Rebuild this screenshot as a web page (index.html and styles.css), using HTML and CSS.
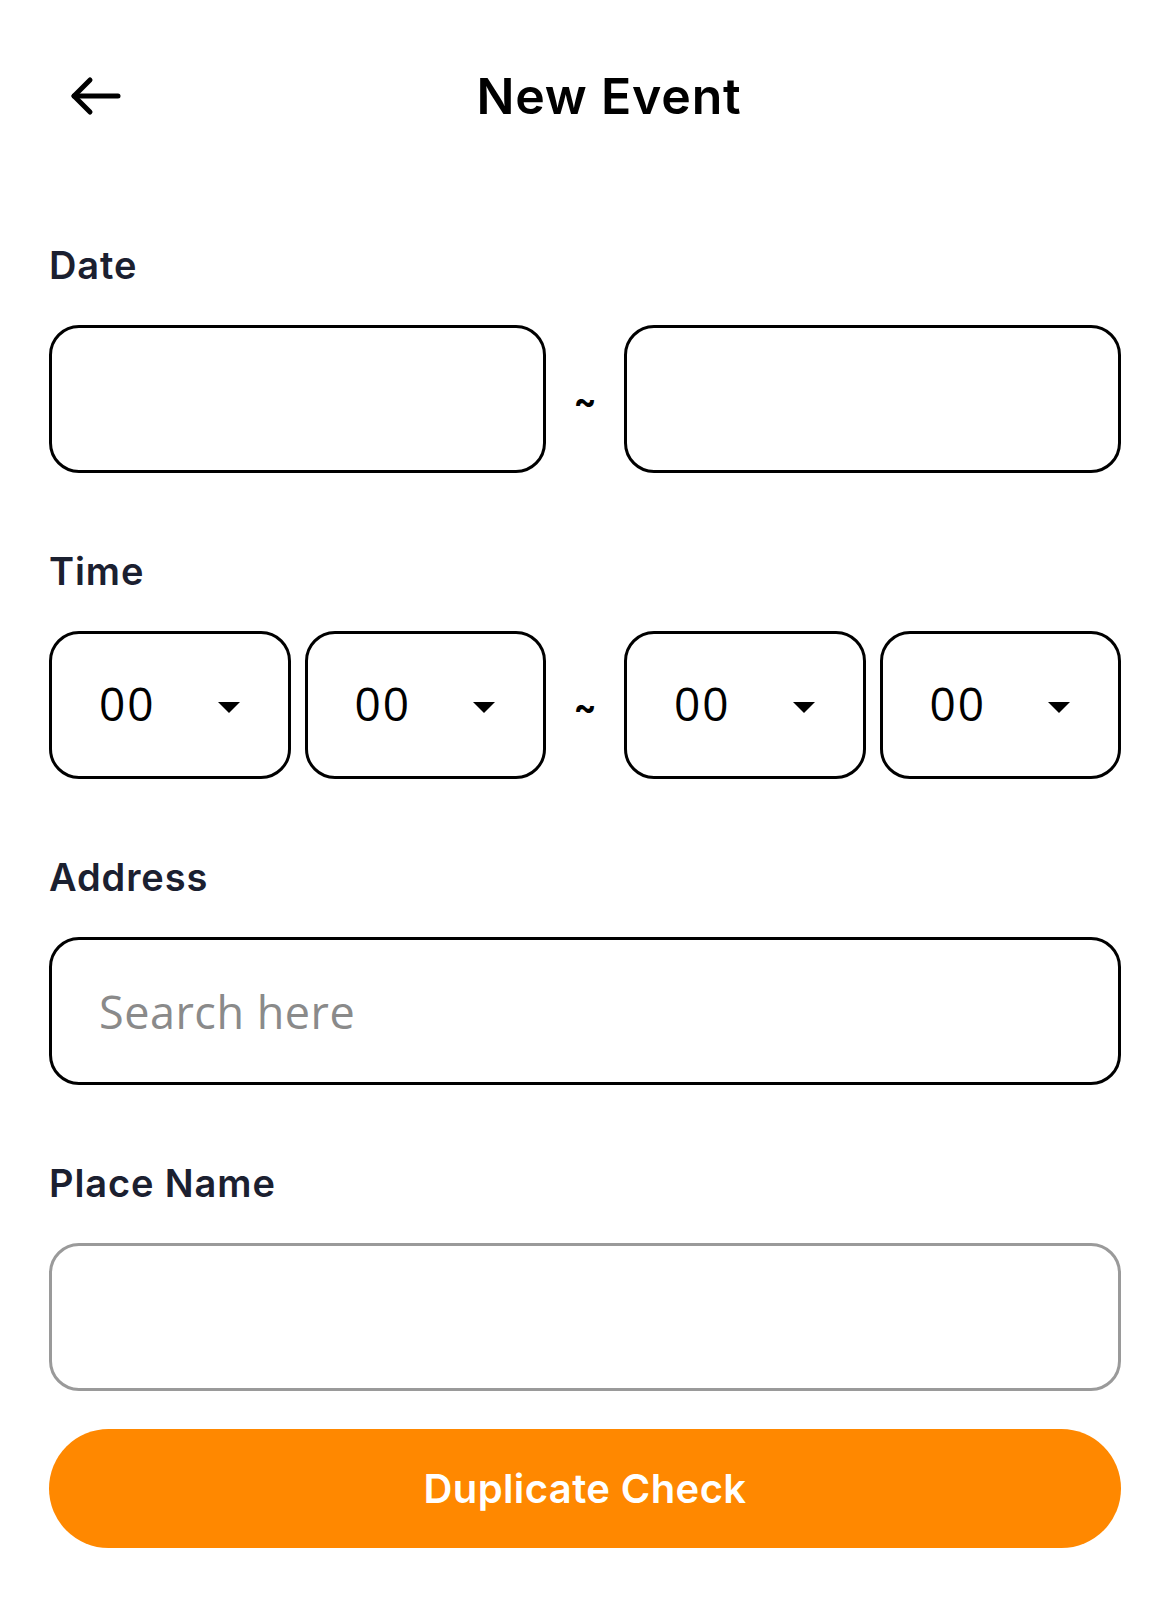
FILE: index.html
```html
<!DOCTYPE html>
<html lang="en">
<head>
<meta charset="utf-8">
<title>New Event</title>
<link rel="stylesheet" href="styles.css">
</head>
<body>
<div class="screen">
  <header class="header">
    <button class="back" aria-label="Back">
      <svg width="54" height="42" viewBox="0 0 54 42" fill="none" stroke="#000" stroke-width="5" stroke-linecap="round" stroke-linejoin="round">
        <path d="M50 21 H6"/>
        <path d="M22 5 L6 21 L22 37"/>
      </svg>
    </button>
    <h1 class="title">New Event</h1>
  </header>

  <main class="form">
    <section class="field">
      <div class="label">Date</div>
      <div class="range">
        <div class="box"></div>
        <div class="tilde">~</div>
        <div class="box"></div>
      </div>
    </section>

    <section class="field">
      <div class="label">Time</div>
      <div class="range">
        <div class="pair">
          <div class="box select"><span class="val">00</span><span class="caret"></span></div>
          <div class="box select"><span class="val">00</span><span class="caret"></span></div>
        </div>
        <div class="tilde">~</div>
        <div class="pair">
          <div class="box select"><span class="val">00</span><span class="caret"></span></div>
          <div class="box select"><span class="val">00</span><span class="caret"></span></div>
        </div>
      </div>
    </section>

    <section class="field">
      <div class="label">Address</div>
      <div class="box text-box"><span class="placeholder">Search here</span></div>
    </section>

    <section class="field">
      <div class="label">Place Name</div>
      <div class="box box-muted"></div>
    </section>

    <button class="primary">Duplicate Check</button>
  </main>
</div>
</body>
</html>
```

FILE: styles.css
```css
* { box-sizing: border-box; }

html, body {
  margin: 0;
  padding: 0;
  background: #fff;
}

body {
  font-family: Inter, "Noto Sans", "Liberation Sans", sans-serif;
  color: #000;
}

.screen {
  width: 1170px;
  min-height: 1609px;
}

.header {
  height: 192px;
  display: flex;
  align-items: center;
  padding: 0 74px 0 68px;
}

.back {
  border: 0;
  background: none;
  padding: 0;
  margin: 0;
  width: 54px;
  height: 42px;
  display: block;
}

.back svg { display: block; }

.title {
  flex: 1;
  margin: 0;
  text-align: center;
  font-size: 50px;
  font-weight: 600;
  letter-spacing: 0.8px;
  color: #000;
}

.form {
  padding: 51px 49px 0 49px;
  display: flex;
  flex-direction: column;
}

.field {
  display: flex;
  flex-direction: column;
  gap: 38px;
  margin-bottom: 76px;
}

.field:nth-last-of-type(1) {
  margin-bottom: 38px;
}

.label {
  height: 44px;
  line-height: 44px;
  font-size: 38px;
  font-weight: 600;
  letter-spacing: 0.9px;
  color: #1b2030;
}

.range {
  display: grid;
  grid-template-columns: 1fr 78px 1fr;
}

.pair {
  display: grid;
  grid-template-columns: 1fr 1fr;
  gap: 14px;
}

.box {
  height: 148px;
  border: 3px solid #000;
  border-radius: 30px;
  background: #fff;
}

.box-muted {
  border-color: #9a9a9a;
}

.tilde {
  display: flex;
  align-items: center;
  justify-content: center;
  font-size: 34px;
  font-weight: 700;
  color: #000;
  padding-top: 2px;
}

.select {
  display: flex;
  align-items: center;
  justify-content: space-between;
  padding: 0 48px 0 47px;
}

.val {
  font-family: "Open Sans", "Noto Sans", sans-serif;
  font-size: 46px;
  font-weight: 400;
  letter-spacing: 2px;
  color: #000;
  line-height: 1;
  margin-top: -4px;
}

.caret {
  width: 0;
  height: 0;
  border-left: 11px solid transparent;
  border-right: 11px solid transparent;
  border-top: 11px solid #000;
  margin-top: 4px;
}

.text-box {
  display: flex;
  align-items: center;
  padding: 0 47px;
}

.placeholder {
  font-family: "Open Sans", "Noto Sans", sans-serif;
  font-size: 45px;
  letter-spacing: 0.5px;
  color: #8a8a8a;
  line-height: 1;
}

.primary {
  height: 119px;
  width: 100%;
  border: 0;
  border-radius: 60px;
  background: #ff8800;
  color: #fff;
  font-family: Inter, "Noto Sans", sans-serif;
  font-size: 40px;
  font-weight: 600;
  letter-spacing: 0.4px;
  padding: 0;
}
```
